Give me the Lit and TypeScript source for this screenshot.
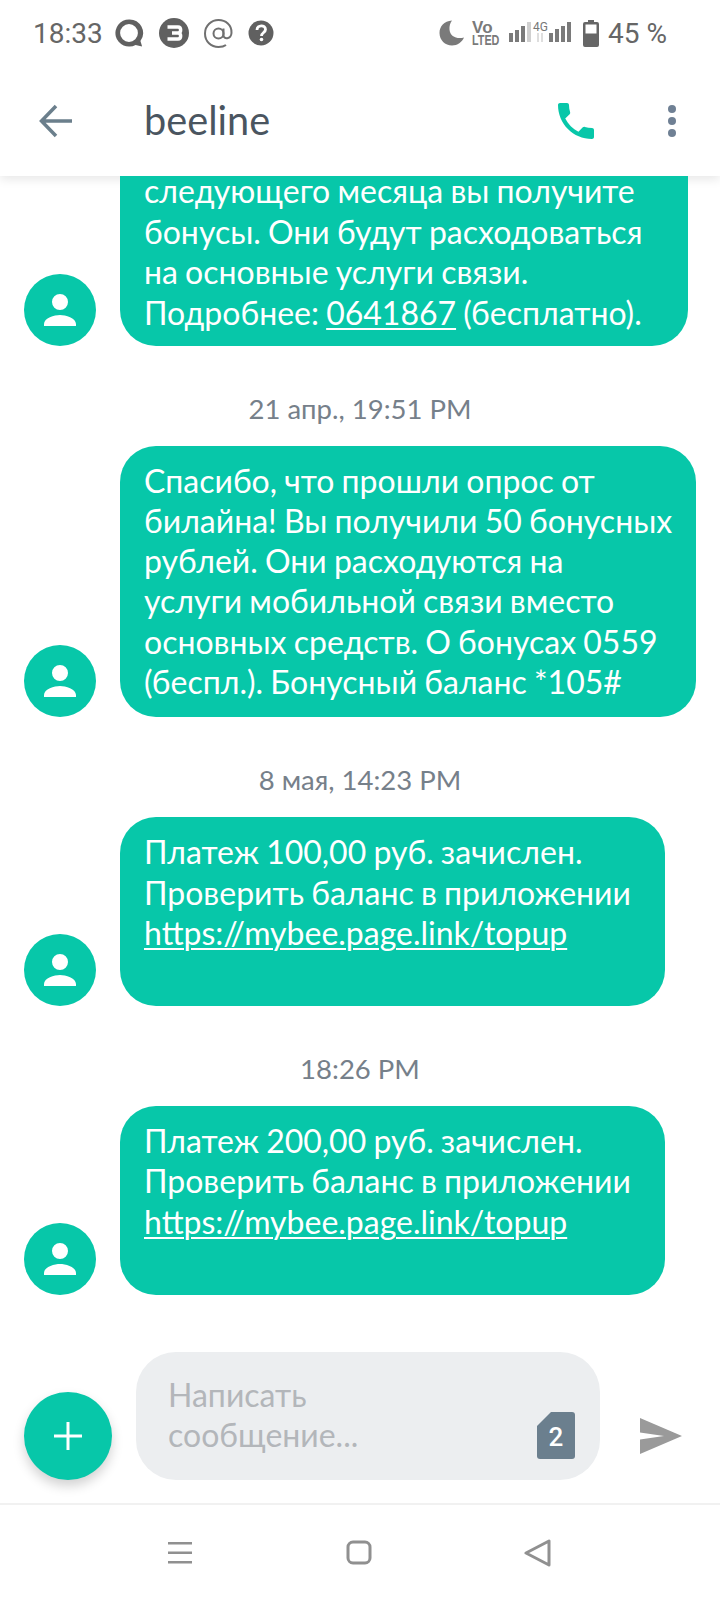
import { LitElement, html, css, svg } from 'lit';
import { customElement } from 'lit/decorators.js';

type Message = {
  time?: string;
  width: number;
  bottom: number;
  clipped?: boolean;
  lines: unknown[];
};

const link = (text: string) => html`<span class="link">${text}</span>`;

const messages: Message[] = [
  {
    width: 568,
    bottom: 13,
    clipped: true,
    lines: [
      'следующего месяца вы получите',
      'бонусы. Они будут расходоваться',
      'на основные услуги связи.',
      html`Подробнее: ${link('0641867')} (бесплатно).`,
    ],
  },
  {
    time: '21 апр., 19:51 PM',
    width: 576,
    bottom: 15.5,
    lines: [
      'Спасибо, что прошли опрос от',
      'билайна! Вы получили 50 бонусных',
      'рублей. Они расходуются на',
      'услуги мобильной связи вместо',
      'основных средств. О бонусах 0559',
      '(беспл.). Бонусный баланс *105#',
    ],
  },
  {
    time: '8 мая, 14:23 PM',
    width: 545,
    bottom: 13,
    lines: [
      'Платеж 100,00 руб. зачислен.',
      'Проверить баланс в приложении',
      link('https://mybee.page.link/topup'),
      html`&nbsp;`,
    ],
  },
  {
    time: '18:26 PM',
    width: 545,
    bottom: 13,
    lines: [
      'Платеж 200,00 руб. зачислен.',
      'Проверить баланс в приложении',
      link('https://mybee.page.link/topup'),
      html`&nbsp;`,
    ],
  },
];

const personIcon = svg`<path d="M36 20a8 8 0 1 1 0 16 8 8 0 0 1 0-16zM20 52v-2c0-6 10.500-9 16-9s16 3 16 9v2z" fill="#fff"/>`;

@customElement('app-root')
export class AppRoot extends LitElement {
  render() {
    return html`
      <div class="status">
        <span class="clock">18:33</span>
        ${this.renderLeftIcons()}
        <span class="spacer"></span>
        ${this.renderRightIcons()}
        <span class="battery-text">45 %</span>
      </div>

      <header class="header">
        <svg class="back" width="48" height="48" viewBox="0 0 48 48" fill="none" stroke="#6b7f8c" stroke-width="3.500">
          <path d="M40 24H10M24 9L9.500 24L24 39" />
        </svg>
        <span class="title">beeline</span>
        <span class="spacer"></span>
        <svg class="phone" width="48" height="48" viewBox="0 0 24 24" fill="#07c7a9">
          <path d="M6.620 10.790c1.440 2.830 3.760 5.140 6.590 6.590l2.200-2.200c.270-.270.670-.360 1.020-.240 1.120.370 2.330.570 3.570.570.550 0 1 .450 1 1V20c0 .550-.450 1-1 1-9.390 0-17-7.610-17-17 0-.550.450-1 1-1h3.500c.550 0 1 .450 1 1 0 1.250.200 2.450.570 3.570.110.350.030.740-.250 1.020l-2.200 2.200z" />
        </svg>
        <div class="dots"><i></i><i></i><i></i></div>
      </header>

      <main class="list">${messages.map(m => this.renderMessage(m))}</main>

      <div class="composer">
        <div class="fab">
          <svg width="32" height="32" viewBox="0 0 32 32" fill="#fff">
            <rect x="14.500" y="2" width="3" height="28" />
            <rect x="2" y="14.500" width="28" height="3" />
          </svg>
        </div>
        <div class="input">
          <span class="placeholder">Написать<br />сообщение...</span>
          <div class="sim">
            <svg width="38" height="47" viewBox="0 0 38 47">
              <path d="M14 0H35a3 3 0 0 1 3 3V44a3 3 0 0 1-3 3H3a3 3 0 0 1-3-3V14z" fill="#6b7f8e" />
            </svg>
            <span class="sim-num">2</span>
          </div>
        </div>
        <svg class="send" width="42" height="36" viewBox="0 0 42 36">
          <path d="M0 0L42 18L0 36V21.500L24 18L0 14.500z" fill="#9a9a9a" />
        </svg>
      </div>

      <nav class="nav">
        <svg width="24" height="24" viewBox="0 0 24 24" fill="#909090">
          <rect y="1" width="24" height="2.500" />
          <rect y="10.500" width="24" height="2.500" />
          <rect y="20" width="24" height="2.500" />
        </svg>
        <svg class="home" width="26" height="26" viewBox="0 0 26 26" fill="none" stroke="#909090" stroke-width="3">
          <rect x="2" y="2" width="22" height="21" rx="5" />
        </svg>
        <svg width="28" height="28" viewBox="0 0 28 28" fill="none" stroke="#909090" stroke-width="3" stroke-linejoin="round">
          <path d="M25 2V26L2 14z" />
        </svg>
      </nav>
    `;
  }

  private renderMessage(m: Message) {
    return html`
      ${m.time ? html`<div class="time">${m.time}</div>` : null}
      <div class="row">
        <svg class="avatar" width="72" height="72" viewBox="0 0 72 72">
          <circle cx="36" cy="36" r="36" fill="#07c7a9" />
          ${personIcon}
        </svg>
        <div
          class="bubble ${m.clipped ? 'clipped' : ''}"
          style="width:${m.width}px;padding-bottom:${m.bottom}px"
        >
          ${m.lines.map(line => html`<div class="line">${line}</div>`)}
        </div>
      </div>
    `;
  }

  private renderLeftIcons() {
    return html`
      <div class="left-icons">
        <svg width="30" height="30" viewBox="0 0 32 32">
          <path d="M16 1.500a14.500 14.500 0 1 0 7 27.200l7 1.800-1.800-6A14.500 14.500 0 0 0 16 1.500zm0 5a9.500 9.500 0 1 1 0 19 9.500 9.500 0 0 1 0-19z" fill="#606060" fill-rule="evenodd" />
        </svg>
        <svg width="30" height="30" viewBox="0 0 30 30">
          <circle cx="15" cy="15" r="15" fill="#606060" />
          <path d="M8.500 9H19c3.500 0 3.500 6 0 6h-6M19 15c3.500 0 3.500 6 0 6H8.500" fill="none" stroke="#fff" stroke-width="3.500" />
        </svg>
        <svg width="29" height="29" viewBox="0 0 29 29" fill="none" stroke="#707070" stroke-width="2">
          <circle cx="14.500" cy="14.500" r="5" />
          <path d="M19.500 9.500v7c0 4 7.500 4 8-2.500C28 6 21.500 1 14.500 1S1 6.500 1 14.500 7 28 14.500 28c3 0 5.500-.500 7.500-2" />
        </svg>
        <svg width="26" height="26" viewBox="0 0 26 26">
          <circle cx="13" cy="13" r="12.500" fill="#606060" />
          <path d="M9 10c0-5.500 8.500-5.500 8.500-.500 0 3-4 3-4 6.500" fill="none" stroke="#fff" stroke-width="2.800" />
          <circle cx="13.500" cy="19.500" r="1.800" fill="#fff" />
        </svg>
      </div>
    `;
  }

  private renderRightIcons() {
    const bars = (heights: number[], fill: string) =>
      heights.map(
        (h, i) => svg`<rect x=${i * 6} y=${20 - h} width="4" height=${h} fill=${fill} />`,
      );
    return html`
      <div class="right-icons">
        <svg width="26" height="26" viewBox="0 0 26 26">
          <path d="M13 .500C5 1 .500 6.500.500 13c0 7 5.500 12.500 12.500 12.500 5.500 0 10-3.500 12-8-7 2-14-1-14.500-8C10.300 6 11 3 13 .500z" fill="#7a7a7a" />
        </svg>
        <div class="volte"><span class="vo">Vo</span><span class="lte">LTED</span></div>
        <svg class="bars" width="22" height="20" viewBox="0 0 22 20">
          ${bars([9, 12, 16], '#7a7a7a')} ${svg`<rect x="18" y="0" width="4" height="20" fill="#d0d0d0" />`}
        </svg>
        <div class="net">
          <span class="g4">4G</span>
          <svg width="14" height="9" viewBox="0 0 14 9" stroke="#d4d4d4" stroke-width="1.500">
            <path d="M5 0V9M9 0V9" />
          </svg>
        </div>
        <svg class="bars" width="22" height="20" viewBox="0 0 22 20">
          ${bars([9, 13, 16, 20], '#7a7a7a')}
        </svg>
        <svg class="battery" width="16" height="27" viewBox="0 0 16 27">
          <path d="M5 0h6v2h3a2 2 0 0 1 2 2v21a2 2 0 0 1-2 2H2a2 2 0 0 1-2-2V4a2 2 0 0 1 2-2h3z" fill="#666" />
          <rect x="2.500" y="4.500" width="11" height="9" fill="#fff" />
        </svg>
      </div>
    `;
  }

  static styles = css`
    :host {
      display: flex;
      flex-direction: column;
      height: 1600px;
      width: 720px;
      overflow: hidden;
      background: #fff;
      font-family: Lato, 'Noto Sans', sans-serif;
    }

    svg {
      display: block;
      flex: none;
    }

    .spacer {
      flex: 1;
    }

    .status {
      position: relative;
      z-index: 2;
      display: flex;
      align-items: center;
      height: 66px;
      padding: 0 53px 0 33px;
      font-family: Roboto, sans-serif;
      color: #666;
      background: #fff;
    }

    .clock {
      font-size: 28px;
      width: 70px;
    }

    .left-icons {
      display: flex;
      align-items: center;
      gap: 15px;
      margin-left: 11px;
    }

    .right-icons {
      display: flex;
      align-items: center;
      height: 28px;
    }

    .volte {
      display: flex;
      flex-direction: column;
      width: 29px;
      margin-left: 7px;
      font-family: 'Liberation Sans', sans-serif;
      font-weight: 700;
      color: #7a7a7a;
    }

    .vo {
      height: 13px;
      font-size: 17px;
      line-height: 13px;
    }

    .lte {
      height: 11px;
      font-size: 15px;
      line-height: 11px;
      transform: scaleX(0.72);
      transform-origin: left center;
    }

    .bars {
      margin-top: -2px;
      margin-left: 8px;
    }

    .net {
      display: flex;
      flex-direction: column;
      width: 14px;
      margin: -2px -6px 0 2px;
    }

    .g4 {
      height: 11px;
      font: 12px/11px Roboto, sans-serif;
      color: #777;
    }

    .battery {
      margin-left: 12px;
    }

    .battery-text {
      font-size: 28px;
      margin-left: 9px;
    }

    .header {
      display: flex;
      align-items: center;
      height: 110px;
      padding: 0 24px 0 32px;
      background: #fff;
      box-shadow: 0 3px 10px rgba(0, 0, 0, 0.1);
    }

    .title {
      margin: -4px 0 0 64px;
      font-size: 39.700px;
      color: #4a5560;
    }

    .dots {
      display: flex;
      flex-direction: column;
      gap: 4px;
      margin: 0 20px 0 68px;
    }

    .dots i {
      width: 8px;
      height: 8px;
      border-radius: 50%;
      background: #6f8094;
    }

    .list {
      flex: 1;
      position: relative;
      z-index: 1;
    }

    .row {
      display: flex;
      align-items: flex-end;
      gap: 24px;
      padding-left: 24px;
    }

    .avatar {
      flex: none;
    }

    .bubble {
      box-sizing: border-box;
      padding: 15px 0 0 24px;
      border-radius: 36px;
      background: #07c7a9;
      color: #fff;
      font-size: 32px;
      word-spacing: -1px;
    }

    .bubble.clipped {
      padding-top: 0;
      border-radius: 0 0 36px 36px;
    }

    .bubble.clipped .line:first-child {
      height: 36.200px;
      line-height: 30px;
    }

    .line {
      height: 40.200px;
      line-height: 40.200px;
      white-space: nowrap;
    }

    .link {
      text-decoration: underline;
      text-underline-offset: 3px;
      text-decoration-thickness: 1.500px;
    }

    .time {
      margin: 45px 0 19px;
      text-align: center;
      font-size: 27.500px;
      line-height: 36px;
      color: #76808a;
    }

    .composer {
      display: flex;
      align-items: flex-end;
      padding: 0 24px;
    }

    .fab {
      display: flex;
      align-items: center;
      justify-content: center;
      width: 88px;
      height: 88px;
      flex: none;
      border-radius: 50%;
      background: #07c7a9;
      box-shadow: 0 6px 12px rgba(0, 0, 0, 0.18);
    }

    .input {
      position: relative;
      box-sizing: border-box;
      width: 465px;
      height: 128px;
      margin-left: 24px;
      padding: 23px 0 0 32px;
      border-radius: 40px;
      background: #eceef0;
    }

    .placeholder {
      display: block;
      font: 32px/40px Lato, sans-serif;
      color: #b3b6ba;
    }

    .sim {
      position: absolute;
      left: 401px;
      top: 60px;
      width: 38px;
      height: 47px;
    }

    .sim-num {
      position: absolute;
      inset: 2px 0 0 0;
      text-align: center;
      font: 500 26px/47px Roboto, sans-serif;
      color: #fff;
    }

    .send {
      margin: 0 14px 26px 40px;
    }

    .nav {
      display: flex;
      align-items: center;
      justify-content: space-between;
      box-sizing: border-box;
      height: 97px;
      margin-top: 23px;
      padding: 0 168px 0;
      border-top: 2px solid #f1f1f1;
    }

    .home {
      margin-left: 2px;
    }
  `;
}

declare global {
  interface HTMLElementTagNameMap {
    'app-root': AppRoot;
  }
}
